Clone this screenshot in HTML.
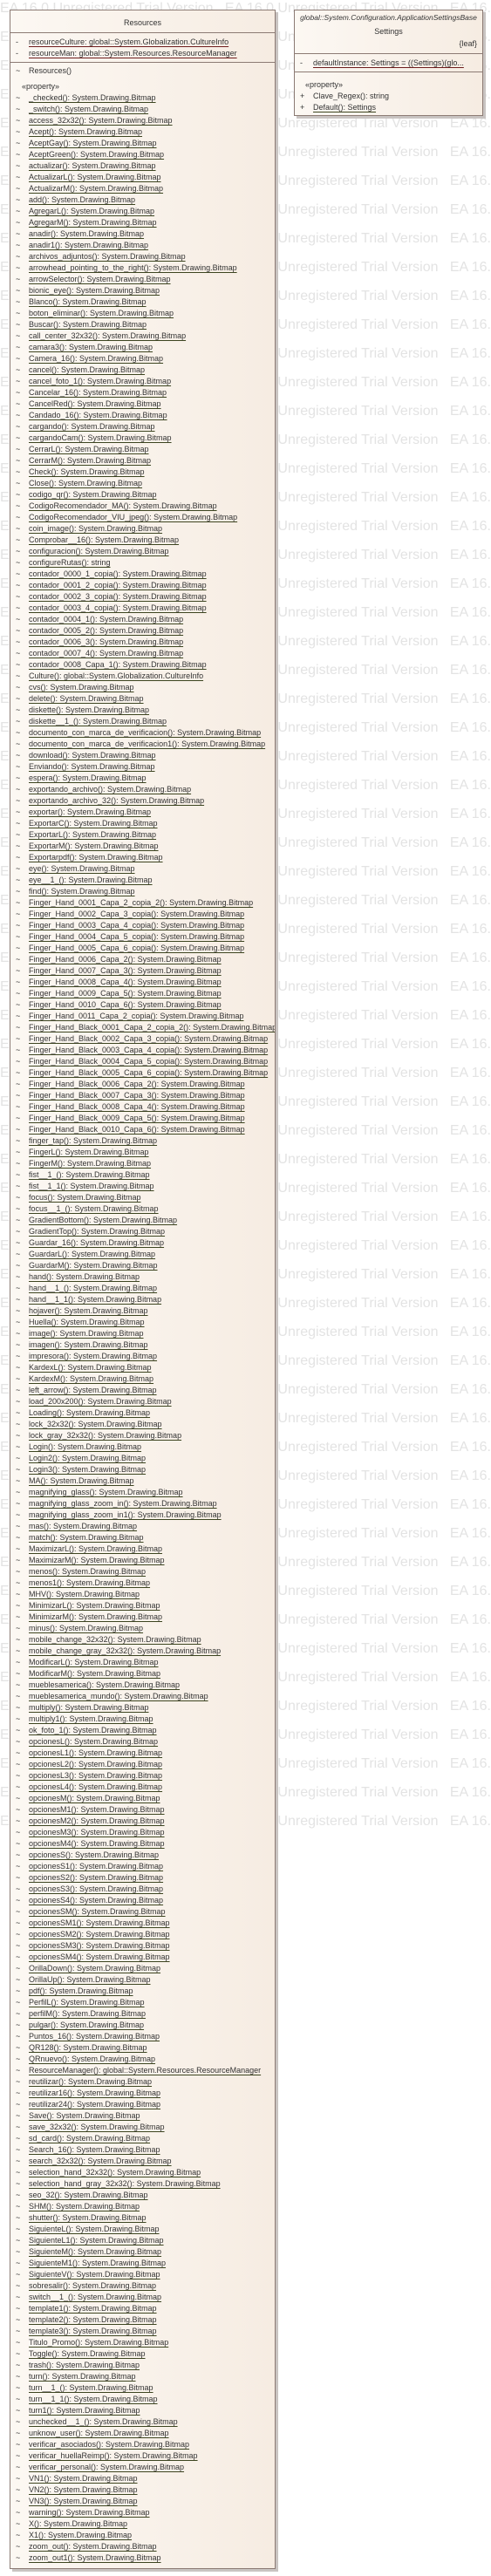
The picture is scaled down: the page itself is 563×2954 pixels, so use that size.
<!DOCTYPE html>
<html><head><meta charset="utf-8"><style>
html,body{margin:0;padding:0;background:#fff;}
body{width:563px;height:2954px;position:relative;overflow:hidden;font-family:"Liberation Sans",sans-serif;}
.wm{position:absolute;left:0;top:0;width:563px;height:2954px;overflow:hidden;color:#e3e3e3;font-size:16px;line-height:47px;white-space:nowrap;}
.wm div{height:47px;margin-top:-14px;}
.box{position:absolute;background:linear-gradient(90deg,#fcf8f3,#f6ece2);border:1px solid #8c7b74;box-shadow:3px 3px 0 #c9c4c2;color:#333;font-size:9px;overflow:hidden;}
.hr{border-top:1px solid #8c7b74;position:absolute;left:0;right:0;}
.ln{position:absolute;left:0;white-space:nowrap;height:13px;line-height:13px;}
.ln i{position:absolute;left:6px;font-style:normal;}
.ln u{position:absolute;left:21px;text-decoration:underline;text-decoration-color:#3d4520;text-decoration-thickness:1px;text-underline-offset:2px;}
.r u{text-decoration-color:#6e1d1d;}
#list{position:absolute;left:0;top:94px;}
#list p{margin:0;height:13px;line-height:13px;position:relative;white-space:nowrap;}
#list p:before{content:"~";position:absolute;left:6px;}
#list p u{position:absolute;left:21px;text-decoration:underline;text-decoration-color:#3d4520;text-underline-offset:2px;}
</style></head><body>
<div class="wm">
<div style="margin-top:-14px">EA 16.0 Unregistered Trial Version &nbsp; EA 16.0 Unregistered Trial Version &nbsp; EA 16.0</div>
<div>EA 16.0 Unregistered Trial Version &nbsp; EA 16.0 Unregistered Trial Version &nbsp; EA 16.0</div>
<div>EA 16.0 Unregistered Trial Version &nbsp; EA 16.0 Unregistered Trial Version &nbsp; EA 16.0</div>
<div>EA 16.0 Unregistered Trial Version &nbsp; EA 16.0 Unregistered Trial Version &nbsp; EA 16.0</div>
<div>EA 16.0 Unregistered Trial Version &nbsp; EA 16.0 Unregistered Trial Version &nbsp; EA 16.0</div>
<div>EA 16.0 Unregistered Trial Version &nbsp; EA 16.0 Unregistered Trial Version &nbsp; EA 16.0</div>
<div>EA 16.0 Unregistered Trial Version &nbsp; EA 16.0 Unregistered Trial Version &nbsp; EA 16.0</div>
<div>EA 16.0 Unregistered Trial Version &nbsp; EA 16.0 Unregistered Trial Version &nbsp; EA 16.0</div>
<div>EA 16.0 Unregistered Trial Version &nbsp; EA 16.0 Unregistered Trial Version &nbsp; EA 16.0</div>
<div>EA 16.0 Unregistered Trial Version &nbsp; EA 16.0 Unregistered Trial Version &nbsp; EA 16.0</div>
<div>EA 16.0 Unregistered Trial Version &nbsp; EA 16.0 Unregistered Trial Version &nbsp; EA 16.0</div>
<div>EA 16.0 Unregistered Trial Version &nbsp; EA 16.0 Unregistered Trial Version &nbsp; EA 16.0</div>
<div>EA 16.0 Unregistered Trial Version &nbsp; EA 16.0 Unregistered Trial Version &nbsp; EA 16.0</div>
<div>EA 16.0 Unregistered Trial Version &nbsp; EA 16.0 Unregistered Trial Version &nbsp; EA 16.0</div>
<div>EA 16.0 Unregistered Trial Version &nbsp; EA 16.0 Unregistered Trial Version &nbsp; EA 16.0</div>
<div>EA 16.0 Unregistered Trial Version &nbsp; EA 16.0 Unregistered Trial Version &nbsp; EA 16.0</div>
<div>EA 16.0 Unregistered Trial Version &nbsp; EA 16.0 Unregistered Trial Version &nbsp; EA 16.0</div>
<div>EA 16.0 Unregistered Trial Version &nbsp; EA 16.0 Unregistered Trial Version &nbsp; EA 16.0</div>
<div>EA 16.0 Unregistered Trial Version &nbsp; EA 16.0 Unregistered Trial Version &nbsp; EA 16.0</div>
<div>EA 16.0 Unregistered Trial Version &nbsp; EA 16.0 Unregistered Trial Version &nbsp; EA 16.0</div>
<div>EA 16.0 Unregistered Trial Version &nbsp; EA 16.0 Unregistered Trial Version &nbsp; EA 16.0</div>
<div>EA 16.0 Unregistered Trial Version &nbsp; EA 16.0 Unregistered Trial Version &nbsp; EA 16.0</div>
<div>EA 16.0 Unregistered Trial Version &nbsp; EA 16.0 Unregistered Trial Version &nbsp; EA 16.0</div>
<div>EA 16.0 Unregistered Trial Version &nbsp; EA 16.0 Unregistered Trial Version &nbsp; EA 16.0</div>
<div>EA 16.0 Unregistered Trial Version &nbsp; EA 16.0 Unregistered Trial Version &nbsp; EA 16.0</div>
<div>EA 16.0 Unregistered Trial Version &nbsp; EA 16.0 Unregistered Trial Version &nbsp; EA 16.0</div>
<div>EA 16.0 Unregistered Trial Version &nbsp; EA 16.0 Unregistered Trial Version &nbsp; EA 16.0</div>
<div>EA 16.0 Unregistered Trial Version &nbsp; EA 16.0 Unregistered Trial Version &nbsp; EA 16.0</div>
<div>EA 16.0 Unregistered Trial Version &nbsp; EA 16.0 Unregistered Trial Version &nbsp; EA 16.0</div>
<div>EA 16.0 Unregistered Trial Version &nbsp; EA 16.0 Unregistered Trial Version &nbsp; EA 16.0</div>
<div>EA 16.0 Unregistered Trial Version &nbsp; EA 16.0 Unregistered Trial Version &nbsp; EA 16.0</div>
<div>EA 16.0 Unregistered Trial Version &nbsp; EA 16.0 Unregistered Trial Version &nbsp; EA 16.0</div>
<div>EA 16.0 Unregistered Trial Version &nbsp; EA 16.0 Unregistered Trial Version &nbsp; EA 16.0</div>
<div>EA 16.0 Unregistered Trial Version &nbsp; EA 16.0 Unregistered Trial Version &nbsp; EA 16.0</div>
<div>EA 16.0 Unregistered Trial Version &nbsp; EA 16.0 Unregistered Trial Version &nbsp; EA 16.0</div>
<div>EA 16.0 Unregistered Trial Version &nbsp; EA 16.0 Unregistered Trial Version &nbsp; EA 16.0</div>
<div>EA 16.0 Unregistered Trial Version &nbsp; EA 16.0 Unregistered Trial Version &nbsp; EA 16.0</div>
<div>EA 16.0 Unregistered Trial Version &nbsp; EA 16.0 Unregistered Trial Version &nbsp; EA 16.0</div>
<div>EA 16.0 Unregistered Trial Version &nbsp; EA 16.0 Unregistered Trial Version &nbsp; EA 16.0</div>
<div>EA 16.0 Unregistered Trial Version &nbsp; EA 16.0 Unregistered Trial Version &nbsp; EA 16.0</div>
<div>EA 16.0 Unregistered Trial Version &nbsp; EA 16.0 Unregistered Trial Version &nbsp; EA 16.0</div>
<div>EA 16.0 Unregistered Trial Version &nbsp; EA 16.0 Unregistered Trial Version &nbsp; EA 16.0</div>
<div>EA 16.0 Unregistered Trial Version &nbsp; EA 16.0 Unregistered Trial Version &nbsp; EA 16.0</div>
<div>EA 16.0 Unregistered Trial Version &nbsp; EA 16.0 Unregistered Trial Version &nbsp; EA 16.0</div>
<div>EA 16.0 Unregistered Trial Version &nbsp; EA 16.0 Unregistered Trial Version &nbsp; EA 16.0</div>
<div>EA 16.0 Unregistered Trial Version &nbsp; EA 16.0 Unregistered Trial Version &nbsp; EA 16.0</div>
<div>EA 16.0 Unregistered Trial Version &nbsp; EA 16.0 Unregistered Trial Version &nbsp; EA 16.0</div>
<div>EA 16.0 Unregistered Trial Version &nbsp; EA 16.0 Unregistered Trial Version &nbsp; EA 16.0</div>
<div>EA 16.0 Unregistered Trial Version &nbsp; EA 16.0 Unregistered Trial Version &nbsp; EA 16.0</div>
<div>EA 16.0 Unregistered Trial Version &nbsp; EA 16.0 Unregistered Trial Version &nbsp; EA 16.0</div>
<div>EA 16.0 Unregistered Trial Version &nbsp; EA 16.0 Unregistered Trial Version &nbsp; EA 16.0</div>
<div>EA 16.0 Unregistered Trial Version &nbsp; EA 16.0 Unregistered Trial Version &nbsp; EA 16.0</div>
<div>EA 16.0 Unregistered Trial Version &nbsp; EA 16.0 Unregistered Trial Version &nbsp; EA 16.0</div>
<div>EA 16.0 Unregistered Trial Version &nbsp; EA 16.0 Unregistered Trial Version &nbsp; EA 16.0</div>
<div>EA 16.0 Unregistered Trial Version &nbsp; EA 16.0 Unregistered Trial Version &nbsp; EA 16.0</div>
<div>EA 16.0 Unregistered Trial Version &nbsp; EA 16.0 Unregistered Trial Version &nbsp; EA 16.0</div>
<div>EA 16.0 Unregistered Trial Version &nbsp; EA 16.0 Unregistered Trial Version &nbsp; EA 16.0</div>
<div>EA 16.0 Unregistered Trial Version &nbsp; EA 16.0 Unregistered Trial Version &nbsp; EA 16.0</div>
<div>EA 16.0 Unregistered Trial Version &nbsp; EA 16.0 Unregistered Trial Version &nbsp; EA 16.0</div>
<div>EA 16.0 Unregistered Trial Version &nbsp; EA 16.0 Unregistered Trial Version &nbsp; EA 16.0</div>
<div>EA 16.0 Unregistered Trial Version &nbsp; EA 16.0 Unregistered Trial Version &nbsp; EA 16.0</div>
<div>EA 16.0 Unregistered Trial Version &nbsp; EA 16.0 Unregistered Trial Version &nbsp; EA 16.0</div>
<div>EA 16.0 Unregistered Trial Version &nbsp; EA 16.0 Unregistered Trial Version &nbsp; EA 16.0</div>
<div>EA 16.0 Unregistered Trial Version &nbsp; EA 16.0 Unregistered Trial Version &nbsp; EA 16.0</div>
</div>

<div class="box" style="left:11px;top:11px;width:303px;height:2933px;">
 <div style="position:absolute;left:0;right:0;top:9px;text-align:center;font-size:9px;">Resources</div>
 <div class="hr" style="top:25px"></div>
 <div class="ln r" style="top:30px"><i>-</i><u>resourceCulture: global::System.Globalization.CultureInfo</u></div>
 <div class="ln r" style="top:43px"><i>-</i><u>resourceMan: global::System.Resources.ResourceManager</u></div>
 <div class="hr" style="top:59px"></div>
 <div class="ln" style="top:63px"><i>~</i><span style="position:absolute;left:21px">Resources()</span></div>
 <div class="ln" style="top:81px"><span style="position:absolute;left:13px">«property»</span></div>
 <div id="list">
<p><u>_checked(): System.Drawing.Bitmap</u></p>
<p><u>_switch(): System.Drawing.Bitmap</u></p>
<p><u>access_32x32(): System.Drawing.Bitmap</u></p>
<p><u>Acept(): System.Drawing.Bitmap</u></p>
<p><u>AceptGay(): System.Drawing.Bitmap</u></p>
<p><u>AceptGreen(): System.Drawing.Bitmap</u></p>
<p><u>actualizar(): System.Drawing.Bitmap</u></p>
<p><u>ActualizarL(): System.Drawing.Bitmap</u></p>
<p><u>ActualizarM(): System.Drawing.Bitmap</u></p>
<p><u>add(): System.Drawing.Bitmap</u></p>
<p><u>AgregarL(): System.Drawing.Bitmap</u></p>
<p><u>AgregarM(): System.Drawing.Bitmap</u></p>
<p><u>anadir(): System.Drawing.Bitmap</u></p>
<p><u>anadir1(): System.Drawing.Bitmap</u></p>
<p><u>archivos_adjuntos(): System.Drawing.Bitmap</u></p>
<p><u>arrowhead_pointing_to_the_right(): System.Drawing.Bitmap</u></p>
<p><u>arrowSelector(): System.Drawing.Bitmap</u></p>
<p><u>bionic_eye(): System.Drawing.Bitmap</u></p>
<p><u>Blanco(): System.Drawing.Bitmap</u></p>
<p><u>boton_eliminar(): System.Drawing.Bitmap</u></p>
<p><u>Buscar(): System.Drawing.Bitmap</u></p>
<p><u>call_center_32x32(): System.Drawing.Bitmap</u></p>
<p><u>camara3(): System.Drawing.Bitmap</u></p>
<p><u>Camera_16(): System.Drawing.Bitmap</u></p>
<p><u>cancel(): System.Drawing.Bitmap</u></p>
<p><u>cancel_foto_1(): System.Drawing.Bitmap</u></p>
<p><u>Cancelar_16(): System.Drawing.Bitmap</u></p>
<p><u>CancelRed(): System.Drawing.Bitmap</u></p>
<p><u>Candado_16(): System.Drawing.Bitmap</u></p>
<p><u>cargando(): System.Drawing.Bitmap</u></p>
<p><u>cargandoCam(): System.Drawing.Bitmap</u></p>
<p><u>CerrarL(): System.Drawing.Bitmap</u></p>
<p><u>CerrarM(): System.Drawing.Bitmap</u></p>
<p><u>Check(): System.Drawing.Bitmap</u></p>
<p><u>Close(): System.Drawing.Bitmap</u></p>
<p><u>codigo_qr(): System.Drawing.Bitmap</u></p>
<p><u>CodigoRecomendador_MA(): System.Drawing.Bitmap</u></p>
<p><u>CodigoRecomendador_VIU_jpeg(): System.Drawing.Bitmap</u></p>
<p><u>coin_image(): System.Drawing.Bitmap</u></p>
<p><u>Comprobar__16(): System.Drawing.Bitmap</u></p>
<p><u>configuracion(): System.Drawing.Bitmap</u></p>
<p><u>configureRutas(): string</u></p>
<p><u>contador_0000_1_copia(): System.Drawing.Bitmap</u></p>
<p><u>contador_0001_2_copia(): System.Drawing.Bitmap</u></p>
<p><u>contador_0002_3_copia(): System.Drawing.Bitmap</u></p>
<p><u>contador_0003_4_copia(): System.Drawing.Bitmap</u></p>
<p><u>contador_0004_1(): System.Drawing.Bitmap</u></p>
<p><u>contador_0005_2(): System.Drawing.Bitmap</u></p>
<p><u>contador_0006_3(): System.Drawing.Bitmap</u></p>
<p><u>contador_0007_4(): System.Drawing.Bitmap</u></p>
<p><u>contador_0008_Capa_1(): System.Drawing.Bitmap</u></p>
<p><u>Culture(): global::System.Globalization.CultureInfo</u></p>
<p><u>cvs(): System.Drawing.Bitmap</u></p>
<p><u>delete(): System.Drawing.Bitmap</u></p>
<p><u>diskette(): System.Drawing.Bitmap</u></p>
<p><u>diskette__1_(): System.Drawing.Bitmap</u></p>
<p><u>documento_con_marca_de_verificacion(): System.Drawing.Bitmap</u></p>
<p><u>documento_con_marca_de_verificacion1(): System.Drawing.Bitmap</u></p>
<p><u>download(): System.Drawing.Bitmap</u></p>
<p><u>Enviando(): System.Drawing.Bitmap</u></p>
<p><u>espera(): System.Drawing.Bitmap</u></p>
<p><u>exportando_archivo(): System.Drawing.Bitmap</u></p>
<p><u>exportando_archivo_32(): System.Drawing.Bitmap</u></p>
<p><u>exportar(): System.Drawing.Bitmap</u></p>
<p><u>ExportarC(): System.Drawing.Bitmap</u></p>
<p><u>ExportarL(): System.Drawing.Bitmap</u></p>
<p><u>ExportarM(): System.Drawing.Bitmap</u></p>
<p><u>Exportarpdf(): System.Drawing.Bitmap</u></p>
<p><u>eye(): System.Drawing.Bitmap</u></p>
<p><u>eye__1_(): System.Drawing.Bitmap</u></p>
<p><u>find(): System.Drawing.Bitmap</u></p>
<p><u>Finger_Hand_0001_Capa_2_copia_2(): System.Drawing.Bitmap</u></p>
<p><u>Finger_Hand_0002_Capa_3_copia(): System.Drawing.Bitmap</u></p>
<p><u>Finger_Hand_0003_Capa_4_copia(): System.Drawing.Bitmap</u></p>
<p><u>Finger_Hand_0004_Capa_5_copia(): System.Drawing.Bitmap</u></p>
<p><u>Finger_Hand_0005_Capa_6_copia(): System.Drawing.Bitmap</u></p>
<p><u>Finger_Hand_0006_Capa_2(): System.Drawing.Bitmap</u></p>
<p><u>Finger_Hand_0007_Capa_3(): System.Drawing.Bitmap</u></p>
<p><u>Finger_Hand_0008_Capa_4(): System.Drawing.Bitmap</u></p>
<p><u>Finger_Hand_0009_Capa_5(): System.Drawing.Bitmap</u></p>
<p><u>Finger_Hand_0010_Capa_6(): System.Drawing.Bitmap</u></p>
<p><u>Finger_Hand_0011_Capa_2_copia(): System.Drawing.Bitmap</u></p>
<p><u>Finger_Hand_Black_0001_Capa_2_copia_2(): System.Drawing.Bitmap</u></p>
<p><u>Finger_Hand_Black_0002_Capa_3_copia(): System.Drawing.Bitmap</u></p>
<p><u>Finger_Hand_Black_0003_Capa_4_copia(): System.Drawing.Bitmap</u></p>
<p><u>Finger_Hand_Black_0004_Capa_5_copia(): System.Drawing.Bitmap</u></p>
<p><u>Finger_Hand_Black_0005_Capa_6_copia(): System.Drawing.Bitmap</u></p>
<p><u>Finger_Hand_Black_0006_Capa_2(): System.Drawing.Bitmap</u></p>
<p><u>Finger_Hand_Black_0007_Capa_3(): System.Drawing.Bitmap</u></p>
<p><u>Finger_Hand_Black_0008_Capa_4(): System.Drawing.Bitmap</u></p>
<p><u>Finger_Hand_Black_0009_Capa_5(): System.Drawing.Bitmap</u></p>
<p><u>Finger_Hand_Black_0010_Capa_6(): System.Drawing.Bitmap</u></p>
<p><u>finger_tap(): System.Drawing.Bitmap</u></p>
<p><u>FingerL(): System.Drawing.Bitmap</u></p>
<p><u>FingerM(): System.Drawing.Bitmap</u></p>
<p><u>fist__1_(): System.Drawing.Bitmap</u></p>
<p><u>fist__1_1(): System.Drawing.Bitmap</u></p>
<p><u>focus(): System.Drawing.Bitmap</u></p>
<p><u>focus__1_(): System.Drawing.Bitmap</u></p>
<p><u>GradientBottom(): System.Drawing.Bitmap</u></p>
<p><u>GradientTop(): System.Drawing.Bitmap</u></p>
<p><u>Guardar_16(): System.Drawing.Bitmap</u></p>
<p><u>GuardarL(): System.Drawing.Bitmap</u></p>
<p><u>GuardarM(): System.Drawing.Bitmap</u></p>
<p><u>hand(): System.Drawing.Bitmap</u></p>
<p><u>hand__1_(): System.Drawing.Bitmap</u></p>
<p><u>hand__1_1(): System.Drawing.Bitmap</u></p>
<p><u>hojaver(): System.Drawing.Bitmap</u></p>
<p><u>Huella(): System.Drawing.Bitmap</u></p>
<p><u>image(): System.Drawing.Bitmap</u></p>
<p><u>imagen(): System.Drawing.Bitmap</u></p>
<p><u>impresora(): System.Drawing.Bitmap</u></p>
<p><u>KardexL(): System.Drawing.Bitmap</u></p>
<p><u>KardexM(): System.Drawing.Bitmap</u></p>
<p><u>left_arrow(): System.Drawing.Bitmap</u></p>
<p><u>load_200x200(): System.Drawing.Bitmap</u></p>
<p><u>Loading(): System.Drawing.Bitmap</u></p>
<p><u>lock_32x32(): System.Drawing.Bitmap</u></p>
<p><u>lock_gray_32x32(): System.Drawing.Bitmap</u></p>
<p><u>Login(): System.Drawing.Bitmap</u></p>
<p><u>Login2(): System.Drawing.Bitmap</u></p>
<p><u>Login3(): System.Drawing.Bitmap</u></p>
<p><u>MA(): System.Drawing.Bitmap</u></p>
<p><u>magnifying_glass(): System.Drawing.Bitmap</u></p>
<p><u>magnifying_glass_zoom_in(): System.Drawing.Bitmap</u></p>
<p><u>magnifying_glass_zoom_in1(): System.Drawing.Bitmap</u></p>
<p><u>mas(): System.Drawing.Bitmap</u></p>
<p><u>match(): System.Drawing.Bitmap</u></p>
<p><u>MaximizarL(): System.Drawing.Bitmap</u></p>
<p><u>MaximizarM(): System.Drawing.Bitmap</u></p>
<p><u>menos(): System.Drawing.Bitmap</u></p>
<p><u>menos1(): System.Drawing.Bitmap</u></p>
<p><u>MHV(): System.Drawing.Bitmap</u></p>
<p><u>MinimizarL(): System.Drawing.Bitmap</u></p>
<p><u>MinimizarM(): System.Drawing.Bitmap</u></p>
<p><u>minus(): System.Drawing.Bitmap</u></p>
<p><u>mobile_change_32x32(): System.Drawing.Bitmap</u></p>
<p><u>mobile_change_gray_32x32(): System.Drawing.Bitmap</u></p>
<p><u>ModificarL(): System.Drawing.Bitmap</u></p>
<p><u>ModificarM(): System.Drawing.Bitmap</u></p>
<p><u>mueblesamerica(): System.Drawing.Bitmap</u></p>
<p><u>mueblesamerica_mundo(): System.Drawing.Bitmap</u></p>
<p><u>multiply(): System.Drawing.Bitmap</u></p>
<p><u>multiply1(): System.Drawing.Bitmap</u></p>
<p><u>ok_foto_1(): System.Drawing.Bitmap</u></p>
<p><u>opcionesL(): System.Drawing.Bitmap</u></p>
<p><u>opcionesL1(): System.Drawing.Bitmap</u></p>
<p><u>opcionesL2(): System.Drawing.Bitmap</u></p>
<p><u>opcionesL3(): System.Drawing.Bitmap</u></p>
<p><u>opcionesL4(): System.Drawing.Bitmap</u></p>
<p><u>opcionesM(): System.Drawing.Bitmap</u></p>
<p><u>opcionesM1(): System.Drawing.Bitmap</u></p>
<p><u>opcionesM2(): System.Drawing.Bitmap</u></p>
<p><u>opcionesM3(): System.Drawing.Bitmap</u></p>
<p><u>opcionesM4(): System.Drawing.Bitmap</u></p>
<p><u>opcionesS(): System.Drawing.Bitmap</u></p>
<p><u>opcionesS1(): System.Drawing.Bitmap</u></p>
<p><u>opcionesS2(): System.Drawing.Bitmap</u></p>
<p><u>opcionesS3(): System.Drawing.Bitmap</u></p>
<p><u>opcionesS4(): System.Drawing.Bitmap</u></p>
<p><u>opcionesSM(): System.Drawing.Bitmap</u></p>
<p><u>opcionesSM1(): System.Drawing.Bitmap</u></p>
<p><u>opcionesSM2(): System.Drawing.Bitmap</u></p>
<p><u>opcionesSM3(): System.Drawing.Bitmap</u></p>
<p><u>opcionesSM4(): System.Drawing.Bitmap</u></p>
<p><u>OrillaDown(): System.Drawing.Bitmap</u></p>
<p><u>OrillaUp(): System.Drawing.Bitmap</u></p>
<p><u>pdf(): System.Drawing.Bitmap</u></p>
<p><u>PerfilL(): System.Drawing.Bitmap</u></p>
<p><u>perfilM(): System.Drawing.Bitmap</u></p>
<p><u>pulgar(): System.Drawing.Bitmap</u></p>
<p><u>Puntos_16(): System.Drawing.Bitmap</u></p>
<p><u>QR128(): System.Drawing.Bitmap</u></p>
<p><u>QRnuevo(): System.Drawing.Bitmap</u></p>
<p><u>ResourceManager(): global::System.Resources.ResourceManager</u></p>
<p><u>reutilizar(): System.Drawing.Bitmap</u></p>
<p><u>reutilizar16(): System.Drawing.Bitmap</u></p>
<p><u>reutilizar24(): System.Drawing.Bitmap</u></p>
<p><u>Save(): System.Drawing.Bitmap</u></p>
<p><u>save_32x32(): System.Drawing.Bitmap</u></p>
<p><u>sd_card(): System.Drawing.Bitmap</u></p>
<p><u>Search_16(): System.Drawing.Bitmap</u></p>
<p><u>search_32x32(): System.Drawing.Bitmap</u></p>
<p><u>selection_hand_32x32(): System.Drawing.Bitmap</u></p>
<p><u>selection_hand_gray_32x32(): System.Drawing.Bitmap</u></p>
<p><u>seo_32(): System.Drawing.Bitmap</u></p>
<p><u>SHM(): System.Drawing.Bitmap</u></p>
<p><u>shutter(): System.Drawing.Bitmap</u></p>
<p><u>SiguienteL(): System.Drawing.Bitmap</u></p>
<p><u>SiguienteL1(): System.Drawing.Bitmap</u></p>
<p><u>SiguienteM(): System.Drawing.Bitmap</u></p>
<p><u>SiguienteM1(): System.Drawing.Bitmap</u></p>
<p><u>SiguienteV(): System.Drawing.Bitmap</u></p>
<p><u>sobresalir(): System.Drawing.Bitmap</u></p>
<p><u>switch__1_(): System.Drawing.Bitmap</u></p>
<p><u>template1(): System.Drawing.Bitmap</u></p>
<p><u>template2(): System.Drawing.Bitmap</u></p>
<p><u>template3(): System.Drawing.Bitmap</u></p>
<p><u>Titulo_Promo(): System.Drawing.Bitmap</u></p>
<p><u>Toggle(): System.Drawing.Bitmap</u></p>
<p><u>trash(): System.Drawing.Bitmap</u></p>
<p><u>turn(): System.Drawing.Bitmap</u></p>
<p><u>turn__1_(): System.Drawing.Bitmap</u></p>
<p><u>turn__1_1(): System.Drawing.Bitmap</u></p>
<p><u>turn1(): System.Drawing.Bitmap</u></p>
<p><u>unchecked__1_(): System.Drawing.Bitmap</u></p>
<p><u>unknow_user(): System.Drawing.Bitmap</u></p>
<p><u>verificar_asociados(): System.Drawing.Bitmap</u></p>
<p><u>verificar_huellaReimp(): System.Drawing.Bitmap</u></p>
<p><u>verificar_personal(): System.Drawing.Bitmap</u></p>
<p><u>VN1(): System.Drawing.Bitmap</u></p>
<p><u>VN2(): System.Drawing.Bitmap</u></p>
<p><u>VN3(): System.Drawing.Bitmap</u></p>
<p><u>warning(): System.Drawing.Bitmap</u></p>
<p><u>X(): System.Drawing.Bitmap</u></p>
<p><u>X1(): System.Drawing.Bitmap</u></p>
<p><u>zoom_out(): System.Drawing.Bitmap</u></p>
<p><u>zoom_out1(): System.Drawing.Bitmap</u></p>
 </div>
</div>

<div class="box" style="left:337px;top:11px;width:215px;height:120px;">
 <div style="position:absolute;left:0;right:0;top:3px;text-align:center;font-style:italic;font-size:8.5px;">global::System.Configuration.ApplicationSettingsBase</div>
 <div style="position:absolute;left:0;right:0;top:19px;text-align:center;">Settings</div>
 <div style="position:absolute;right:6px;top:33px;">{leaf}</div>
 <div class="hr" style="top:49px"></div>
 <div class="ln r" style="top:54px"><i>-</i><u>defaultInstance: Settings = ((Settings)(glo...</u></div>
 <div class="hr" style="top:70px"></div>
 <div class="ln" style="top:79px"><span style="position:absolute;left:12px">«property»</span></div>
 <div class="ln" style="top:92px"><i>+</i><span style="position:absolute;left:21px">Clave_Regex(): string</span></div>
 <div class="ln" style="top:105px"><i>+</i><u>Default(): Settings</u></div>
</div>
</body></html>
